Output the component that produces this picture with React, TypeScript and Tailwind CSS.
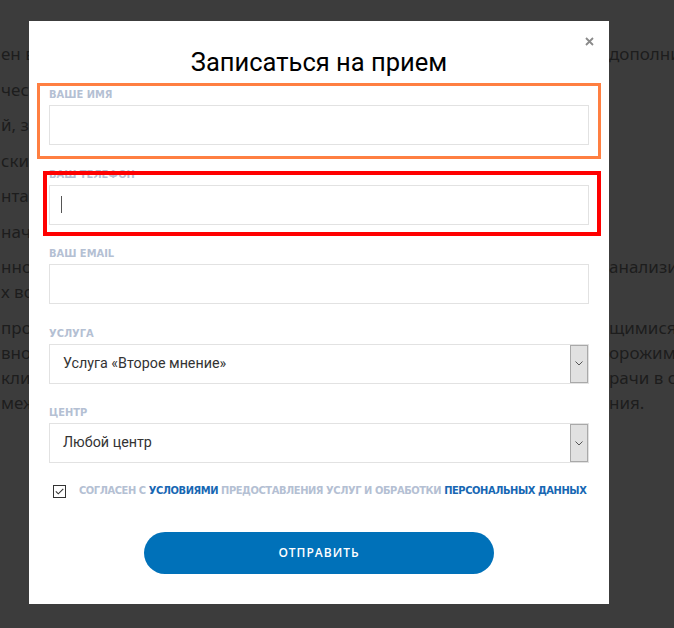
import React from "react";

const bgLines: { l: string; r: string }[][] = [
  [{ l: "ен в соответствии с требованиями", r: "дополнительные исследования" }],
  [{ l: "ческих обследований и консультаций", r: "" }],
  [{ l: "й, заключений и рекомендаций", r: "" }],
  [{ l: "ские данные пациента", r: "" }],
  [{ l: "нта, включая результаты", r: "" }],
  [{ l: "начение лечения", r: "" }],
  [
    { l: "нного лечения и", r: "анализирует" },
    { l: "х вопросов пациента", r: "" },
  ],
  [
    { l: "противопоказаний", r: "щимися для" },
    { l: "вное лечение", r: "орожим репутацией" },
    { l: " клиники", r: "рачи в обязательном" },
    { l: "международного", r: "ния." },
  ],
];

const labelFont = { fontFamily: '"DejaVu Sans Condensed", "DejaVu Sans", sans-serif', fontStretch: "condensed" as const };

function Field({ label, children }: { label: string; children: React.ReactNode }) {
  return (
    <div className="mb-[20.5px]">
      <div className="text-[11px] leading-[18px] mb-[1px] font-bold text-[#b4c0d3] uppercase" style={labelFont}>
        {label}
      </div>
      {children}
    </div>
  );
}

function SelectBox({ value }: { value: string }) {
  return (
    <div className="flex h-[40px] border border-[#e2e2e2] bg-white">
      <div className="flex-1 flex items-center pl-[13px] text-[14.3px] text-[#333]" style={{ fontFamily: "Roboto, sans-serif" }}>
        {value}
      </div>
      <div className="w-[18px] border border-[#a9a9a9] bg-[#e1e1e1] flex items-center justify-center">
        <svg width="8" height="5" viewBox="0 0 8 5">
          <path d="M0.5 0.5 L4 4 L7.5 0.5" fill="none" stroke="#555" strokeWidth="1" />
        </svg>
      </div>
    </div>
  );
}

export default function App() {
  return (
    <div className="relative w-[674px] h-[628px] overflow-hidden bg-[#3c3c3c]">
      {/* dimmed page content */}
      <div className="text-[17px] text-[#1d1d1d]" style={{ fontFamily: '"Noto Sans", sans-serif' }}>
        <div className="h-[25px] leading-[25px] mt-[-23px] mb-[39px] pl-[120px] whitespace-nowrap">
          Консультации проводятся ведущими специалистами клиник Германии, Израиля и других стран
        </div>
        {bgLines.map((p, i) => (
          <div key={i} className="mb-[10.5px]">
            {p.map((line, j) => (
              <div key={j} className="flex h-[25px] leading-[25px] whitespace-nowrap">
                <span className="w-[609px] shrink-0 overflow-hidden pl-[1px]">{line.l}</span>
                <span>{line.r}</span>
              </div>
            ))}
          </div>
        ))}
        <div className="mt-[208px] pl-[188px] text-[24px] leading-[30px]">Наши преимущества</div>
      </div>

      {/* modal */}
      <div className="absolute left-[29px] top-[21px] w-[580px] h-[583px] bg-white px-[20px] pt-[25px]">
        <button
          className="absolute right-[14px] top-[14px] w-[12px] h-[12px] flex items-center justify-center"
          aria-label="close"
        >
          <svg width="9" height="9" viewBox="0 0 9 9">
            <path d="M1 1 L8 8 M8 1 L1 8" stroke="#8a8a8a" strokeWidth="1.8" />
          </svg>
        </button>
        <h2
          className="text-center text-[25.5px] leading-[32px] text-black mb-[8px]"
          style={{ fontFamily: "Roboto, sans-serif" }}
        >
          Записаться на прием
        </h2>

        <Field label="Ваше имя">
          <div className="h-[40px] border border-[#e2e2e2]" />
        </Field>
        <Field label="Ваш телефон">
          <div className="h-[40px] border border-[#e2e2e2] flex items-center pl-[11px]">
            <span className="w-[1px] h-[17px] bg-[#555]" />
          </div>
        </Field>
        <Field label="Ваш email">
          <div className="h-[40px] border border-[#e2e2e2]" />
        </Field>
        <Field label="Услуга">
          <SelectBox value="Услуга «Второе мнение»" />
        </Field>
        <Field label="Центр">
          <SelectBox value="Любой центр" />
        </Field>

        <div className="flex items-center pl-[4px] mt-[1px] h-[16px]">
          <div className="w-[13px] h-[13px] border border-[#333] flex items-center justify-center shrink-0">
            <svg width="9" height="7" viewBox="0 0 9 7">
              <path d="M0.8 3.4 L3.3 5.8 L8.3 0.8" fill="none" stroke="#333" strokeWidth="1.1" />
            </svg>
          </div>
          <div className="ml-[13px] text-[11px] font-bold whitespace-nowrap text-[#b4c0d3] tracking-[-0.42px]" style={labelFont}>
            СОГЛАСЕН С <span className="text-[#1767b3]">УСЛОВИЯМИ</span> ПРЕДОСТАВЛЕНИЯ УСЛУГ И ОБРАБОТКИ{" "}
            <span className="text-[#1767b3]">ПЕРСОНАЛЬНЫХ ДАННЫХ</span>
          </div>
        </div>

        <div className="flex justify-center mt-[32px]">
          <button
            className="w-[350px] h-[42px] rounded-full bg-[#0071b9] text-white text-[12px] font-semibold tracking-[1px]"
            style={{ fontFamily: '"Open Sans", sans-serif' }}
          >
            ОТПРАВИТЬ
          </button>
        </div>
      </div>

      {/* annotation boxes */}
      <div className="absolute left-[37px] top-[83px] w-[564px] h-[76px] border-[3px] border-[#ff7f41]" />
      <div className="absolute left-[43px] top-[171px] w-[558px] h-[65px] border-[4px] border-[#ff0000]" />
    </div>
  );
}
